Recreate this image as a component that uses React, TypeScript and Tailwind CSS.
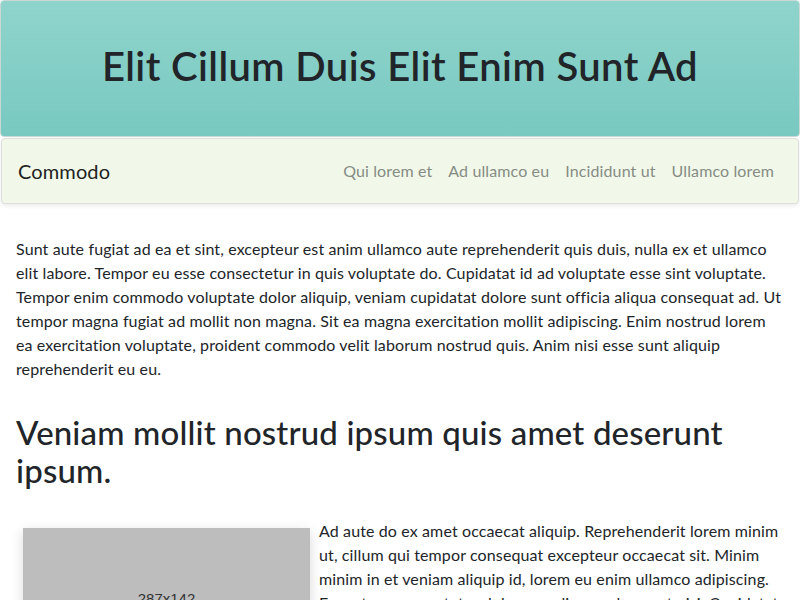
export default function App() {
  const links = ["Qui lorem et", "Ad ullamco eu", "Incididunt ut", "Ullamco lorem"];

  return (
    <div className="min-h-screen bg-white text-[#212529] font-['Lato','Noto_Sans',sans-serif] text-base leading-6 tracking-[0.12px]">
      <header className="h-[137px] pb-[6px] flex items-center justify-center border border-[#c9d8d5] rounded-[4px] bg-gradient-to-b from-[#8fd4cc] to-[#78c9c1]">
        <h1 className="text-[40px] font-semibold leading-[48px] tracking-[0.4px] text-[#212529]">
          Elit Cillum Duis Elit Enim Sunt Ad
        </h1>
      </header>

      <nav className="mt-px mx-px h-[66px] flex items-center justify-between px-4 bg-[#f1f8ea] border border-[#dcdfdb] rounded-[4px] shadow-[0_2px_4px_rgba(0,0,0,0.08)]">
        <a className="text-xl text-[#222]">Commodo</a>
        <ul className="flex">
          {links.map((l) => (
            <li key={l} className="px-2 text-[#868c84]">
              {l}
            </li>
          ))}
        </ul>
      </nav>

      <main className="px-4 pt-[33px]">
        <p className="mb-4">
          Sunt aute fugiat ad ea et sint, excepteur est anim ullamco aute reprehenderit quis duis, nulla ex et ullamco
          elit labore. Tempor eu esse consectetur in quis voluptate do. Cupidatat id ad voluptate esse sint voluptate.
          Tempor enim commodo voluptate dolor aliquip, veniam cupidatat dolore sunt officia aliqua consequat ad. Ut
          tempor magna fugiat ad mollit non magna. Sit ea magna exercitation mollit adipiscing. Enim nostrud lorem ea
          exercitation voluptate, proident commodo velit laborum nostrud quis. Anim nisi esse sunt aliquip
          reprehenderit eu eu.
        </p>

        <h2 className="mt-[32px] text-[33px] leading-[38px] font-medium tracking-[0.15px]">
          Veniam mollit nostrud ipsum quis amet deserunt ipsum.
        </h2>

        <div className="mt-[30px]">
          <div className="float-left ml-[7px] mr-[9px] mt-[9px] w-[287px] h-[142px] bg-[#bdbdbd] shadow-[0_4px_12px_rgba(0,0,0,0.15)] flex items-center justify-center text-[15px] tracking-normal text-[#333] font-['Liberation_Sans',sans-serif]">
            287x142
          </div>
          <p>
            Ad aute do ex amet occaecat aliquip. Reprehenderit lorem minim ut, cillum qui tempor consequat excepteur
            occaecat sit. Minim minim in et veniam aliquip id, lorem eu enim ullamco adipiscing. Excepteur consectetur
            dolore ex aliqua culpa sunt nisi. Cupidatat ullamco esse quis sit aliqua.
          </p>
        </div>
      </main>
    </div>
  );
}
